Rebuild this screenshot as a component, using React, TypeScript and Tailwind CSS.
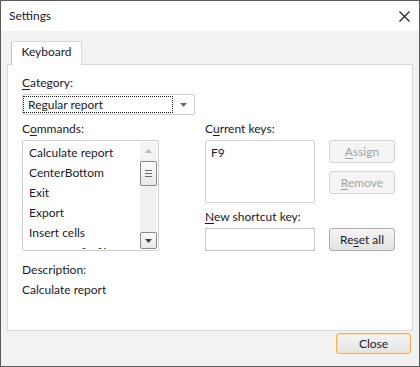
import React from "react";

function U({ children }: { children: React.ReactNode }) {
  return <span className="underline decoration-1 underline-offset-[2px]">{children}</span>;
}

function Triangle({ color, dir }: { color: string; dir: "up" | "down" }) {
  return (
    <svg width="7" height="4" viewBox="0 0 7 4">
      {dir === "down" ? (
        <polygon points="0,0 7,0 3.5,4" fill={color} />
      ) : (
        <polygon points="0,4 7,4 3.5,0" fill={color} />
      )}
    </svg>
  );
}

export default function App() {
  const items = ["Calculate report", "CenterBottom", "Exit", "Export", "Insert cells", "Open config file"];
  return (
    <div className="w-[420px] h-[367px] border border-[#5a5a5a] flex flex-col bg-[#f2f2f2] text-[12px] leading-[16px] text-[#1a1a2a] font-['Segoe_UI',Lato,sans-serif] overflow-hidden">
      {/* title bar */}
      <div className="h-[30px] shrink-0 bg-white flex items-center justify-between pl-[8px] pr-[9px]">
        <span>Settings</span>
        <svg width="11" height="11" viewBox="0 0 11 11">
          <path d="M0.5 0.5 L10.5 10.5 M10.5 0.5 L0.5 10.5" stroke="#1a1a1a" strokeWidth="1.1" />
        </svg>
      </div>
      {/* body */}
      <div className="flex-1 flex flex-col px-[6px] pt-[10px]">
        <div className="ml-[4px] w-[71px] h-[24px] -mb-[1px] relative z-10 bg-white border-t border-x border-[#d9d9d9] border-l-[#c4c4c4] rounded-t-[2px] flex justify-center pt-[2px]">
          Keyboard
        </div>
        <div className="h-[267px] bg-white border border-[#d9d9d9] pl-[14px] pt-[10px] flex flex-col">
          <div>
            <U>C</U>ategory:
          </div>
          <div className="mt-[3px] w-[173px] h-[21px] border border-[#cfcfcf] rounded-[2px] flex items-center pr-[7px]">
            <div className="w-[150px] h-[17px] border border-dotted border-[#222] flex items-center pl-[4px] leading-[15px]">
              Regular report
            </div>
            <div className="flex-1 flex justify-end">
              <Triangle color="#6a6a6a" dir="down" />
            </div>
          </div>
          <div className="mt-[6px] flex">
            {/* left column */}
            <div className="w-[137px] flex flex-col">
              <div>
                C<U>o</U>mmands:
              </div>
              <div className="mt-[3px] h-[111px] border border-[#cfcfcf] rounded-[2px] flex p-[1px]">
                <div className="flex-1 overflow-hidden pl-[5px] pt-[1px] leading-[20px]">
                  {items.map((t) => (
                    <div key={t} className="h-[20px] whitespace-nowrap">
                      {t}
                    </div>
                  ))}
                </div>
                <div className="w-[17px] bg-[#f0f0f0] flex flex-col items-stretch">
                  <div className="h-[17px] flex items-center justify-center bg-[#f4f4f4]">
                    <Triangle color="#b8b8b8" dir="up" />
                  </div>
                  <div className="mt-[2px] h-[25px] border border-[#8a8a8a] rounded-[2px] bg-gradient-to-b from-[#fbfbfb] to-[#e8e8e8] flex flex-col items-center justify-center gap-[2px]">
                    <div className="w-[7px] h-[1px] bg-[#6a6a6a]" />
                    <div className="w-[7px] h-[1px] bg-[#6a6a6a]" />
                    <div className="w-[7px] h-[1px] bg-[#6a6a6a]" />
                  </div>
                  <div className="flex-1" />
                  <div className="h-[17px] border border-[#8a8a8a] rounded-[2px] bg-gradient-to-b from-[#fbfbfb] to-[#e8e8e8] flex items-center justify-center">
                    <Triangle color="#404040" dir="down" />
                  </div>
                </div>
              </div>
            </div>
            {/* right column */}
            <div className="ml-[46px] flex flex-col">
              <div>
                C<U>u</U>rrent keys:
              </div>
              <div className="mt-[3px] flex">
                <div className="w-[110px] h-[63px] border border-[#d4d4d4] rounded-[2px] pl-[5px] pt-[4px]">F9</div>
                <div className="ml-[14px] flex flex-col gap-[8px]">
                  <div className="w-[66px] h-[23px] border border-[#d5d5d5] rounded-[3px] bg-[#f4f4f4] text-[#a3a3a3] flex items-center justify-center">
                    <span>
                      <U>A</U>ssign
                    </span>
                  </div>
                  <div className="w-[66px] h-[23px] border border-[#d5d5d5] rounded-[3px] bg-[#f4f4f4] text-[#a3a3a3] flex items-center justify-center">
                    <span>
                      <U>R</U>emove
                    </span>
                  </div>
                </div>
              </div>
              <div className="mt-[6px]">
                <U>N</U>ew shortcut key:
              </div>
              <div className="mt-[3px] flex">
                <div className="w-[110px] h-[23px] border border-[#c6c6c6] bg-white" />
                <div className="ml-[14px] w-[66px] h-[23px] border border-[#adadad] rounded-[3px] bg-gradient-to-b from-[#f5f5f5] to-[#e3e3e3] flex items-center justify-center">
                  <span>
                    Re<U>s</U>et all
                  </span>
                </div>
              </div>
            </div>
          </div>
          <div className="mt-[11px]">Description:</div>
          <div className="mt-[4px]">Calculate report</div>
        </div>
        <div className="flex justify-end mt-[2px] pr-[2px]">
          <div className="w-[75px] h-[21px] border border-[#f2b150] rounded-[3px] shadow-[inset_0_0_0_1px_#fde3b4] bg-gradient-to-b from-[#f5f5f5] to-[#e3e3e3] flex items-center justify-center">
            Close
          </div>
        </div>
      </div>
    </div>
  );
}
